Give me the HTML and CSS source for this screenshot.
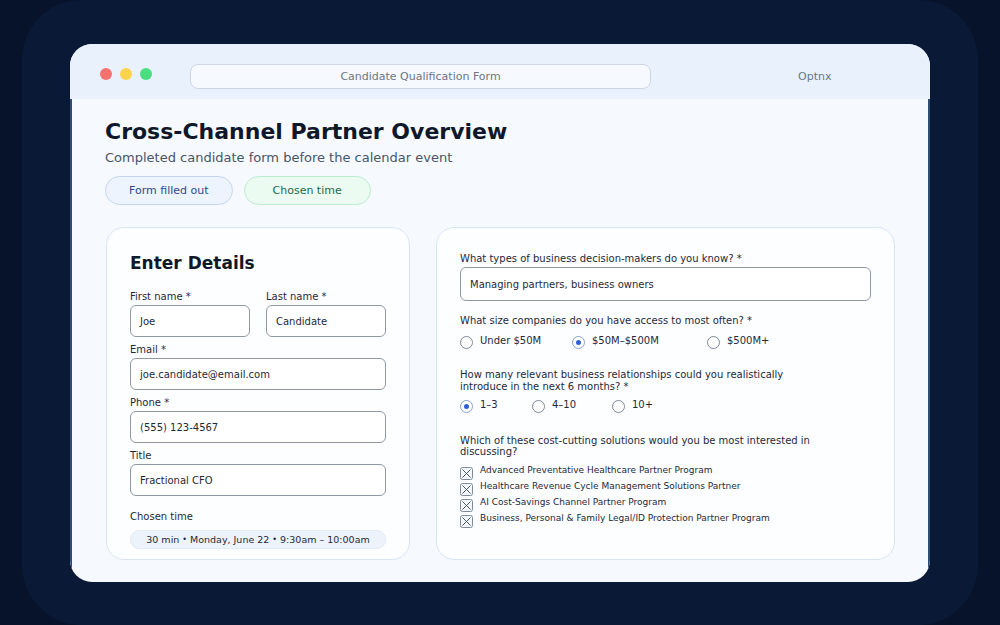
FILE: index.html
```html
<!DOCTYPE html>
<html>
<head>
<meta charset="utf-8">
<link rel="stylesheet" href="styles.css">
</head>
<body>
<div class="stage">
  <div class="window">
    <div class="titlebar">
      <span class="dot red"></span><span class="dot yellow"></span><span class="dot green"></span>
      <div class="address">Candidate Qualification Form</div>
      <div class="brand">Optnx</div>
    </div>
    <div class="content">
      <h1 class="title">Cross-Channel Partner Overview</h1>
      <p class="subtitle">Completed candidate form before the calendar event</p>
      <div class="pills">
        <span class="pill pill-blue">Form filled out</span>
        <span class="pill pill-green">Chosen time</span>
      </div>
      <div class="cards">
        <section class="card card-left">
          <h2 class="card-title">Enter Details</h2>
          <div class="row2">
            <div class="field">
              <div class="label">First name *</div>
              <div class="input">Joe</div>
            </div>
            <div class="field">
              <div class="label">Last name *</div>
              <div class="input">Candidate</div>
            </div>
          </div>
          <div class="field">
            <div class="label">Email *</div>
            <div class="input">joe.candidate@email.com</div>
          </div>
          <div class="field">
            <div class="label">Phone *</div>
            <div class="input">(555) 123-4567</div>
          </div>
          <div class="field">
            <div class="label">Title</div>
            <div class="input">Fractional CFO</div>
          </div>
          <div class="field field-time">
            <div class="label label-time">Chosen time</div>
            <div class="time">30 min<span class="sep">•</span>Monday, June 22<span class="sep">•</span>9:30am – 10:00am</div>
          </div>
        </section>
        <section class="card card-right">
          <div class="q">
            <div class="label">What types of business decision-makers do you know? *</div>
            <div class="input input-wide">Managing partners, business owners</div>
          </div>
          <div class="q">
            <div class="label">What size companies do you have access to most often? *</div>
            <div class="opts opts-size">
              <span class="opt"><span class="radio"></span>Under $50M</span>
              <span class="opt"><span class="radio on"></span>$50M–$500M</span>
              <span class="opt"><span class="radio"></span>$500M+</span>
            </div>
          </div>
          <div class="q">
            <div class="label label-wrap">How many relevant business relationships could you realistically introduce in the next 6 months? *</div>
            <div class="opts opts-count">
              <span class="opt"><span class="radio on"></span>1–3</span>
              <span class="opt"><span class="radio"></span>4–10</span>
              <span class="opt"><span class="radio"></span>10+</span>
            </div>
          </div>
          <div class="q q-last">
            <div class="label label-wrap label-tight">Which of these cost-cutting solutions would you be most interested in discussing?</div>
            <ul class="checks">
              <li class="check"><svg class="cbox" width="13" height="13" viewBox="0 0 13 13"><rect x="0.5" y="0.5" width="12" height="12" rx="2" fill="#f4f8fd" stroke="#7d8aa0"/><path d="M2.5 2.5 L10.5 10.5 M10.5 2.5 L2.5 10.5" stroke="#4b5b76" stroke-width="1"/></svg>Advanced Preventative Healthcare Partner Program</li>
              <li class="check"><svg class="cbox" width="13" height="13" viewBox="0 0 13 13"><rect x="0.5" y="0.5" width="12" height="12" rx="2" fill="#f4f8fd" stroke="#7d8aa0"/><path d="M2.5 2.5 L10.5 10.5 M10.5 2.5 L2.5 10.5" stroke="#4b5b76" stroke-width="1"/></svg>Healthcare Revenue Cycle Management Solutions Partner</li>
              <li class="check"><svg class="cbox" width="13" height="13" viewBox="0 0 13 13"><rect x="0.5" y="0.5" width="12" height="12" rx="2" fill="#f4f8fd" stroke="#7d8aa0"/><path d="M2.5 2.5 L10.5 10.5 M10.5 2.5 L2.5 10.5" stroke="#4b5b76" stroke-width="1"/></svg>AI Cost-Savings Channel Partner Program</li>
              <li class="check"><svg class="cbox" width="13" height="13" viewBox="0 0 13 13"><rect x="0.5" y="0.5" width="12" height="12" rx="2" fill="#f4f8fd" stroke="#7d8aa0"/><path d="M2.5 2.5 L10.5 10.5 M10.5 2.5 L2.5 10.5" stroke="#4b5b76" stroke-width="1"/></svg>Business, Personal &amp; Family Legal/ID Protection Partner Program</li>
            </ul>
          </div>
        </section>
      </div>
    </div>
  </div>
</div>
</body>
</html>
```

FILE: styles.css
```css
* { box-sizing: border-box; }
html, body { margin: 0; padding: 0; }
body {
  width: 1000px;
  height: 625px;
  overflow: hidden;
  background: #07132a;
  font-family: "DejaVu Sans", "Noto Sans", sans-serif;
  color: #1e293b;
}
.stage {
  margin: 0 22px;
  height: 625px;
  background: #0a1a36;
  border-radius: 60px;
  padding: 44px 48px 43px;
}
.window {
  width: 860px;
  height: 538px;
  border-radius: 22px;
  overflow: hidden;
  background: #f6faff;
  display: flex;
  flex-direction: column;
}
.titlebar {
  height: 55px;
  flex: none;
  background: #e9f1fd;
  display: flex;
  align-items: flex-start;
  padding-left: 30px;
}
.dot {
  width: 12px;
  height: 12px;
  border-radius: 50%;
  margin-right: 8px;
  margin-top: 24px;
  flex: none;
}
.dot.red { background: #f87171; }
.dot.yellow { background: #fcd34d; }
.dot.green { background: #4ade80; margin-right: 0; }
.address {
  margin-left: 38px;
  margin-top: 20px;
  width: 461px;
  height: 25px;
  border: 1px solid #cdd6e2;
  border-radius: 8px;
  background: #f6f9fe;
  color: #6b7686;
  font-size: 11px;
  display: flex;
  align-items: center;
  justify-content: center;
}
.brand {
  margin-left: 147px;
  margin-top: 26px;
  line-height: 14px;
  color: #6b7686;
  font-size: 11px;
}
.content {
  flex: 1;
  display: flex;
  flex-direction: column;
  padding: 20px 35px 22px;
  box-shadow: inset 2px 0 0 #2f4e76, inset -2px 0 0 #2f4e76;
}
.title {
  margin: 0;
  font-size: 22px;
  line-height: 26px;
  font-weight: 700;
  color: #0f172a;
}
.subtitle {
  margin: 5px 0 0;
  font-size: 13px;
  line-height: 16px;
  color: #475569;
}
.pills {
  display: flex;
  gap: 11px;
  margin-top: 10px;
}
.pill {
  height: 29px;
  border-radius: 15px;
  display: flex;
  align-items: center;
  font-size: 11px;
}
.pill-blue { background: #eef4fd; border: 1px solid #c3d5ef; color: #2c4a8c; padding: 0 23px; }
.pill-green { background: #ebfbf2; border: 1px solid #bdebd0; color: #1f6a45; padding: 0 28px; }
.cards {
  flex: 1;
  display: grid;
  grid-template-columns: 304px 1fr;
  gap: 26px;
  margin-top: 22px;
  margin-left: 1px;
}
.card {
  background: #fdfeff;
  border: 1.5px solid #d8e4f2;
  border-radius: 18px;
  padding: 25px 23px 0 23px;
}
.card-title {
  margin: 0 0 18px;
  font-size: 17px;
  line-height: 20px;
  font-weight: 700;
  color: #111827;
}
.row2 {
  display: grid;
  grid-template-columns: 1fr 1fr;
  gap: 16px;
}
.field { margin-bottom: 7px; }
.label {
  font-size: 10px;
  line-height: 12px;
  color: #1e293b;
  margin-bottom: 2px;
}
.input {
  height: 32px;
  border: 1px solid #8f98a4;
  border-radius: 6px;
  background: #ffffff;
  font-size: 10px;
  color: #1f2937;
  display: flex;
  align-items: center;
  padding-left: 9px;
}
.field-time { margin-top: 15px; }
.label-time { margin-bottom: 7px; }
.time {
  height: 19px;
  border-radius: 9px;
  background: #edf3fb;
  border: 1px solid #e3ebf5;
  font-size: 9.5px;
  color: #1f2937;
  display: flex;
  align-items: center;
  justify-content: center;
}
.sep { margin: 0 3px; font-size: 8px; }
.q { margin-bottom: 14px; }
.q .label { margin-bottom: 2px; }
.label-wrap { max-width: 360px; }
.input-wide { height: 34px; padding-left: 9px; }
.opts {
  display: grid;
  margin-top: 8px;
  padding-bottom: 6px;
  font-size: 10px;
  color: #1e293b;
}
.opts-count { margin-top: 6px; padding-bottom: 8px; }
.opts-size { grid-template-columns: 112px 135px auto; }
.opts-count { grid-template-columns: 72px 80px auto; }
.opt {
  display: flex;
  align-items: flex-start;
  line-height: 12px;
  height: 14px;
}
.radio {
  width: 13px;
  height: 13px;
  border-radius: 50%;
  border: 1px solid #7d8797;
  background: #ffffff;
  margin-right: 7px;
  margin-top: 1px;
  position: relative;
  flex: none;
}
.radio.on { border-color: #8aa3c8; }
.radio.on::after {
  content: "";
  position: absolute;
  left: 3px;
  top: 3px;
  width: 5px;
  height: 5px;
  border-radius: 50%;
  background: #2f5fd0;
}
.label-tight { line-height: 11px; }
.checks {
  list-style: none;
  margin: 8px 0 0;
  padding: 0;
}
.check {
  display: flex;
  align-items: flex-start;
  height: 16px;
  font-size: 9px;
  line-height: 11px;
  color: #1e293b;
}
.cbox {
  flex: none;
  margin-right: 7px;
  margin-top: 2px;
}
```
